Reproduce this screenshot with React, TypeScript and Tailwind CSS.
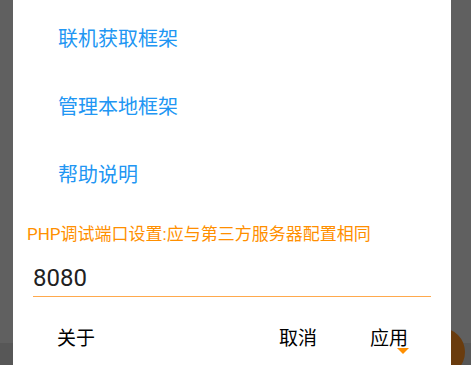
export default function App() {
  const menu = ["联机获取框架", "管理本地框架", "帮助说明"]

  return (
    <div
      className="relative flex h-[365px] w-[471px] flex-col overflow-hidden bg-[#606060]"
      style={{ fontFamily: "Roboto, 'Noto Sans CJK SC', sans-serif" }}
    >
      {/* dimmed page behind the dialog */}
      <div className="flex-1" />
      <div className="h-[22px] bg-[#575757]" />
      <div className="absolute left-[417px] top-[328px] h-[48px] w-[48px] rounded-full bg-[#6a3c0e]" />

      {/* dialog */}
      <div className="absolute left-[13px] top-0 flex h-full w-[438px] flex-col bg-white">
        <div className="pt-[5px]">
          {menu.map((item) => (
            <div key={item} className="flex h-[68px] items-center pl-[45px] text-[20px] leading-[28px] text-[#2196f3]">
              {item}
            </div>
          ))}
        </div>

        <div className="mt-[13px] pl-[14px] text-[17px] leading-[24px] text-[#ff8f00]">
          PHP调试端口设置:应与第三方服务器配置相同
        </div>

        <div className="mx-[20px] mt-[16px] border-b-[1.5px] border-[#ffa94d] pb-[2px]">
          <div className="text-[24px] leading-[32px] text-[#212121]">8080</div>
        </div>

        <div className="mt-[29px] flex items-center justify-between pl-[44px] pr-[43px] text-[19px] leading-[26px] text-black">
          <span>关于</span>
          <div className="relative flex gap-[53px]">
            <span>取消</span>
            <span>应用</span>
            <span className="absolute right-[-1px] top-[22px] h-0 w-0 border-x-[6px] border-t-[6px] border-x-transparent border-t-[#ff8f00]" />
          </div>
        </div>
      </div>
    </div>
  )
}
